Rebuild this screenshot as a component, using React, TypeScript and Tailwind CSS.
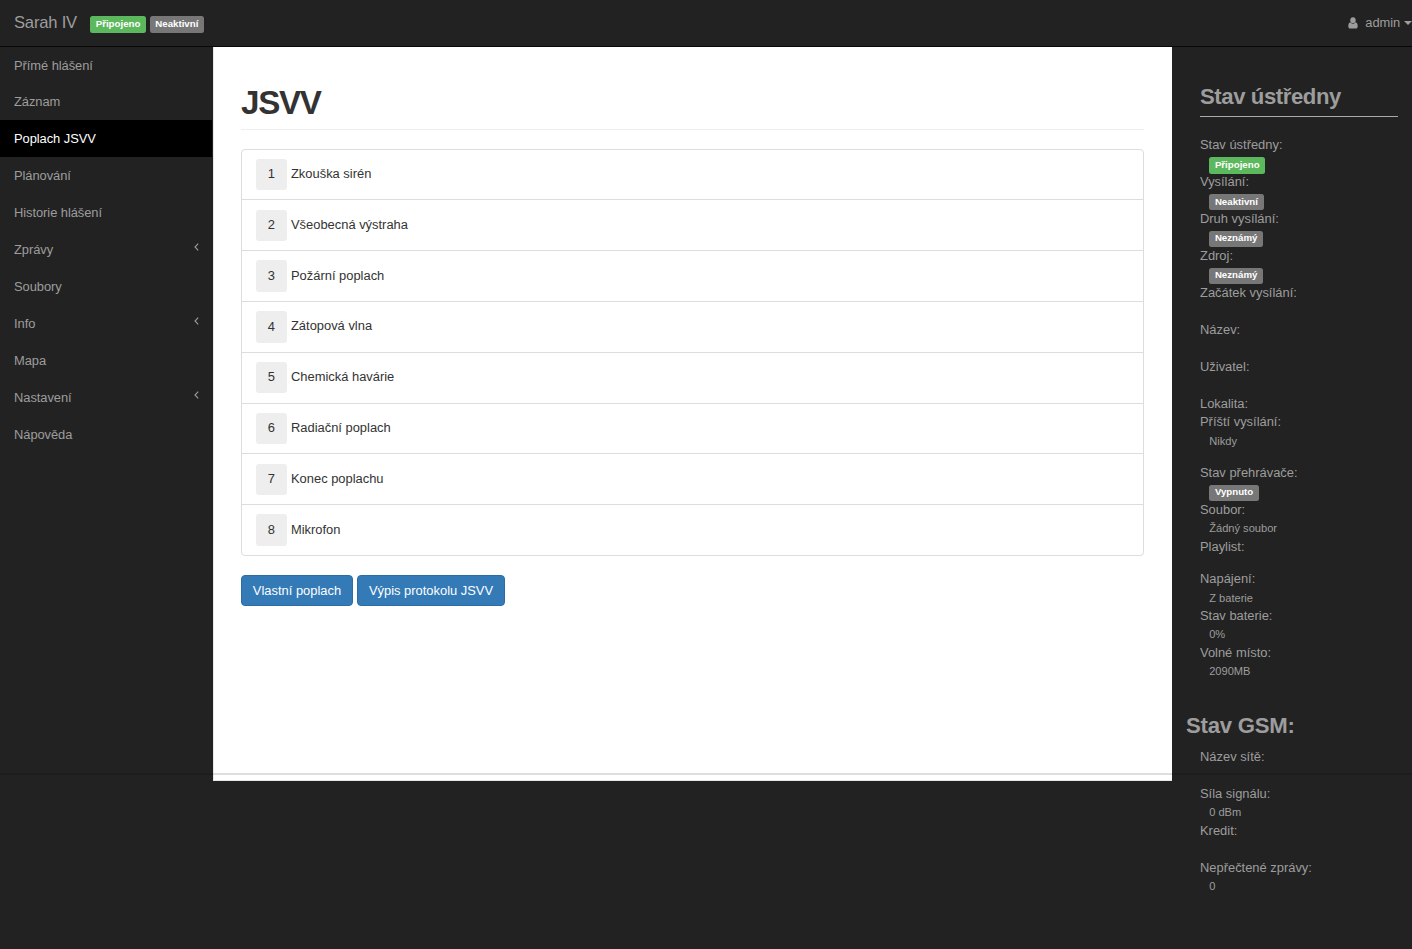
import React from "react";

const menu = [
  { label: "Přímé hlášení" },
  { label: "Záznam" },
  { label: "Poplach JSVV", active: true },
  { label: "Plánování" },
  { label: "Historie hlášení" },
  { label: "Zprávy", nested: true },
  { label: "Soubory" },
  { label: "Info", nested: true },
  { label: "Mapa" },
  { label: "Nastavení", nested: true },
  { label: "Nápověda" },
];

const alarms = [
  "Zkouška sirén",
  "Všeobecná výstraha",
  "Požární poplach",
  "Zátopová vlna",
  "Chemická havárie",
  "Radiační poplach",
  "Konec poplachu",
  "Mikrofon",
];

type Status = { label: string; text?: string; badge?: string; green?: boolean; tight?: boolean };

const station: Status[] = [
  { label: "Stav ústředny:", badge: "Připojeno", green: true },
  { label: "Vysílání:", badge: "Neaktivní" },
  { label: "Druh vysílání:", badge: "Neznámý" },
  { label: "Zdroj:", badge: "Neznámý" },
  { label: "Začátek vysílání:" },
  { label: "Název:" },
  { label: "Uživatel:" },
  { label: "Lokalita:", tight: true },
  { label: "Příští vysílání:", text: "Nikdy" },
];

const player: Status[] = [
  { label: "Stav přehrávače:", badge: "Vypnuto" },
  { label: "Soubor:", text: "Žádný soubor" },
  { label: "Playlist:", tight: true },
];

const power: Status[] = [
  { label: "Napájení:", text: "Z baterie" },
  { label: "Stav baterie:", text: "0%" },
  { label: "Volné místo:", text: "2090MB" },
];

const gsm: Status[] = [
  { label: "Název sítě:" },
  { label: "Síla signálu:", text: "0 dBm" },
  { label: "Kredit:" },
  { label: "Nepřečtené zprávy:", text: "0" },
];

function UserIcon() {
  return (
    <svg viewBox="0 0 10 12" className="mr-[7px] h-[12px] w-[10px]" fill="currentColor">
      <ellipse cx="5" cy="3.3" rx="2.7" ry="3" />
      <path d="M2.4 5.2C.9 5.4.3 7 .3 9.2c0 1.4.8 2.3 2 2.3h5.4c1.2 0 2-.9 2-2.3 0-2.2-.6-3.8-2.1-4C7 6.1 6.1 6.7 5 6.7S3 6.1 2.4 5.2z" />
    </svg>
  );
}

function AngleLeft() {
  return (
    <svg viewBox="0 0 5 8" className="mb-[5px] h-[8px] w-[5px]" fill="none" stroke="currentColor" strokeWidth="1.1">
      <path d="M4.2.7 1 4l3.2 3.3" />
    </svg>
  );
}

function Badge({ children, green }: { children: React.ReactNode; green?: boolean }) {
  return (
    <span
      className={`inline-flex h-[16.4px] items-center rounded-[2.5px] px-[5.7px] pb-px text-[9.7px] font-bold text-white ${
        green ? "bg-[#5cb85c]" : "bg-[#777]"
      }`}
    >
      {children}
    </span>
  );
}

function StatusList({ items }: { items: Status[] }) {
  return (
    <dl>
      {items.map((s) => (
        <React.Fragment key={s.label}>
          <dt className="h-[18.46px]">{s.label}</dt>
          {!s.tight && (
            <dd className={`flex h-[18.46px] items-center pl-[9.2px] text-[11.1px] ${s.badge ? "pt-[2.6px]" : ""}`}>
              {s.badge ? <Badge green={s.green}>{s.badge}</Badge> : s.text}
            </dd>
          )}
        </React.Fragment>
      ))}
    </dl>
  );
}

export default function App() {
  return (
    <div className="relative flex h-[949px] w-[1412px] flex-col overflow-hidden bg-[#222] font-['Liberation_Sans',Arial,sans-serif] text-[12.92px] leading-[18.46px] text-[#9d9d9d]">
      <header className="flex h-[47px] shrink-0 items-center border-b border-[#080808] pl-3.5">
        <span className="w-[76px] pt-px text-[16.6px] tracking-[-0.2px]">Sarah IV</span>
        <div className="flex gap-[3.5px] pt-[3px]">
          <Badge green>Připojeno</Badge>
          <Badge>Neaktivní</Badge>
        </div>
        <div className="ml-auto flex items-center">
          <UserIcon />
          <span className="pt-px tracking-[-0.1px]">admin</span>
          <span className="ml-[4px] border-x-[4px] border-t-[4px] border-x-transparent border-t-[#9d9d9d]" />
        </div>
      </header>
      <div className="flex min-h-0 flex-1">
        <nav className="-mt-[0.4px] w-[213px] shrink-0">
          <ul>
            {menu.map((m) => (
              <li
                key={m.label}
                className={`mr-px flex h-[36.92px] items-center justify-between pr-[13px] pl-3.5 ${
                  m.active ? "bg-black text-white" : ""
                }`}
              >
                <span className="pt-[1.4px] tracking-[-0.06px]">{m.label}</span>
                {m.nested && <AngleLeft />}
              </li>
            ))}
          </ul>
        </nav>
        <main className="h-[734px] w-[959px] shrink-0 border-b border-l border-[#e7e7e7] bg-white pr-[28px] pl-[27px] pt-[36px] text-[#333]">
          <h1 className="h-[47px] border-b border-[#eee] text-[33.2px] leading-[40px] font-bold tracking-[-1.3px]">JSVV</h1>
          <ol className="mt-[18.6px] rounded-[4px] border border-[#ddd]">
            {alarms.map((a, i) => (
              <li
                key={a}
                className="flex h-[50.8px] items-center border-b border-[#ddd] pl-[13.6px] last:h-[50px] last:border-b-0"
              >
                <span className="mr-1 flex size-[31.4px] items-center justify-center rounded-[3px] bg-[#eee]">{i + 1}</span>
                <span className="pb-[0.4px]">{a}</span>
              </li>
            ))}
          </ol>
          <div className="mt-[18.4px] flex gap-1 text-white">
            <button className="h-[31.4px] w-[112px] rounded-[4px] border border-[#2e6da4] bg-[#337ab7] pt-px">
              Vlastní poplach
            </button>
            <button className="h-[31.4px] w-[148px] rounded-[4px] border border-[#2e6da4] bg-[#337ab7] pt-px">
              Výpis protokolu JSVV
            </button>
          </div>
        </main>
        <aside className="flex-1 px-3.5">
          <div className="pl-3.5">
            <h2 className="h-[70px] border-b border-[#aaa] pt-[36px] text-[22.15px] leading-[28px] font-bold tracking-[-0.42px]">
              Stav ústředny
            </h2>
            <div className="flex flex-col gap-[13.85px] pt-[19.4px]">
              <StatusList items={station} />
              <StatusList items={player} />
              <StatusList items={power} />
            </div>
          </div>
          <h2 className="mt-[31.3px] mb-[8px] text-[22.15px] leading-[28px] font-bold tracking-[-0.22px]">Stav GSM:</h2>
          <div className="pl-3.5">
            <StatusList items={gsm} />
          </div>
        </aside>
      </div>
      <div className="pointer-events-none absolute inset-x-0 top-[773px] h-[2px] bg-black/13" />
    </div>
  );
}
